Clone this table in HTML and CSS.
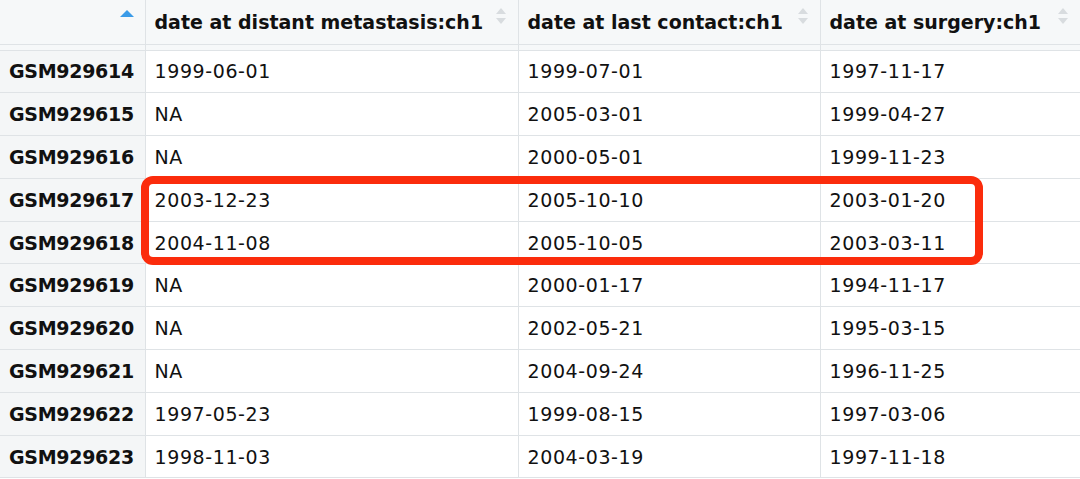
FILE: index.html
```html
<!DOCTYPE html>
<html lang="en">
  <head>
    <meta charset="UTF-8" />
    <title>Data viewer</title>
    <link rel="stylesheet" href="styles.css">
  </head>
  <body>
    <div class="viewer">
      <table class="grid">
        <thead>
          <tr>
            <th class="rowname"><span class="sort-up"></span></th>
            <th class="col-a">date at distant metastasis:ch1<span class="sort"></span></th>
            <th class="col-b">date at last contact:ch1<span class="sort"></span></th>
            <th class="col-c">date at surgery:ch1<span class="sort"></span></th>
          </tr>
          <tr class="spacer">
            <th></th><th></th><th></th><th></th>
          </tr>
        </thead>
        <tbody>
          <tr><th>GSM929614</th><td>1999-06-01</td><td>1999-07-01</td><td>1997-11-17</td></tr>
          <tr><th>GSM929615</th><td>NA</td><td>2005-03-01</td><td>1999-04-27</td></tr>
          <tr><th>GSM929616</th><td>NA</td><td>2000-05-01</td><td>1999-11-23</td></tr>
          <tr><th>GSM929617</th><td>2003-12-23</td><td>2005-10-10</td><td>2003-01-20</td></tr>
          <tr><th>GSM929618</th><td>2004-11-08</td><td>2005-10-05</td><td>2003-03-11</td></tr>
          <tr><th>GSM929619</th><td>NA</td><td>2000-01-17</td><td>1994-11-17</td></tr>
          <tr><th>GSM929620</th><td>NA</td><td>2002-05-21</td><td>1995-03-15</td></tr>
          <tr><th>GSM929621</th><td>NA</td><td>2004-09-24</td><td>1996-11-25</td></tr>
          <tr><th>GSM929622</th><td>1997-05-23</td><td>1999-08-15</td><td>1997-03-06</td></tr>
          <tr><th>GSM929623</th><td>1998-11-03</td><td>2004-03-19</td><td>1997-11-18</td></tr>
        </tbody>
      </table>
      <div class="highlight"></div>
    </div>
  </body>
</html>
```

FILE: styles.css
```css
* {
  margin: 0;
  padding: 0;
  box-sizing: border-box;
}

body {
  background: #ffffff;
  font-family: "DejaVu Sans", "Liberation Sans", sans-serif;
  color: #111111;
  overflow: hidden;
}

.viewer {
  position: relative;
  width: 1080px;
}

.grid {
  width: 1080px;
  border-collapse: collapse;
  table-layout: fixed;
  font-size: 19px;
}

.grid th,
.grid td {
  border: 1px solid #dfe3e6;
  padding: 0 0 0 9px;
  text-align: left;
  white-space: nowrap;
  height: 42.8px;
}

.grid td {
  letter-spacing: 0.6px;
}

.grid tr > :first-child {
  border-left: none;
}

.grid tr > :last-child {
  border-right: none;
}

.grid thead th {
  position: relative;
  background: #f6f8f9;
  font-weight: bold;
  border-top: none;
  height: 44px;
}

.grid .rowname {
  width: 145px;
}

.grid .col-a {
  width: 373px;
}

.grid .col-b {
  width: 302px;
}

.grid .spacer th {
  height: 6px;
  background: #f6f8f9;
}

.grid tbody th {
  background: #f4f6f7;
  font-weight: bold;
  letter-spacing: -0.3px;
}

.sort-up {
  position: absolute;
  right: 11px;
  top: 10px;
  width: 0;
  height: 0;
  border-left: 7px solid transparent;
  border-right: 7px solid transparent;
  border-bottom: 7px solid #3a9be8;
}

.sort {
  position: absolute;
  right: 12px;
  top: 8px;
  width: 10px;
  height: 16px;
}

.sort::before,
.sort::after {
  content: "";
  position: absolute;
  left: 0;
  width: 0;
  height: 0;
  border-left: 5px solid transparent;
  border-right: 5px solid transparent;
}

.sort::before {
  top: 0;
  border-bottom: 6px solid #d8dcdf;
}

.sort::after {
  bottom: 0;
  border-top: 6px solid #d8dcdf;
}

.highlight {
  position: absolute;
  left: 141px;
  top: 176px;
  width: 842px;
  height: 89px;
  border: 8px solid #fb2c0c;
  border-radius: 12px;
}
```
